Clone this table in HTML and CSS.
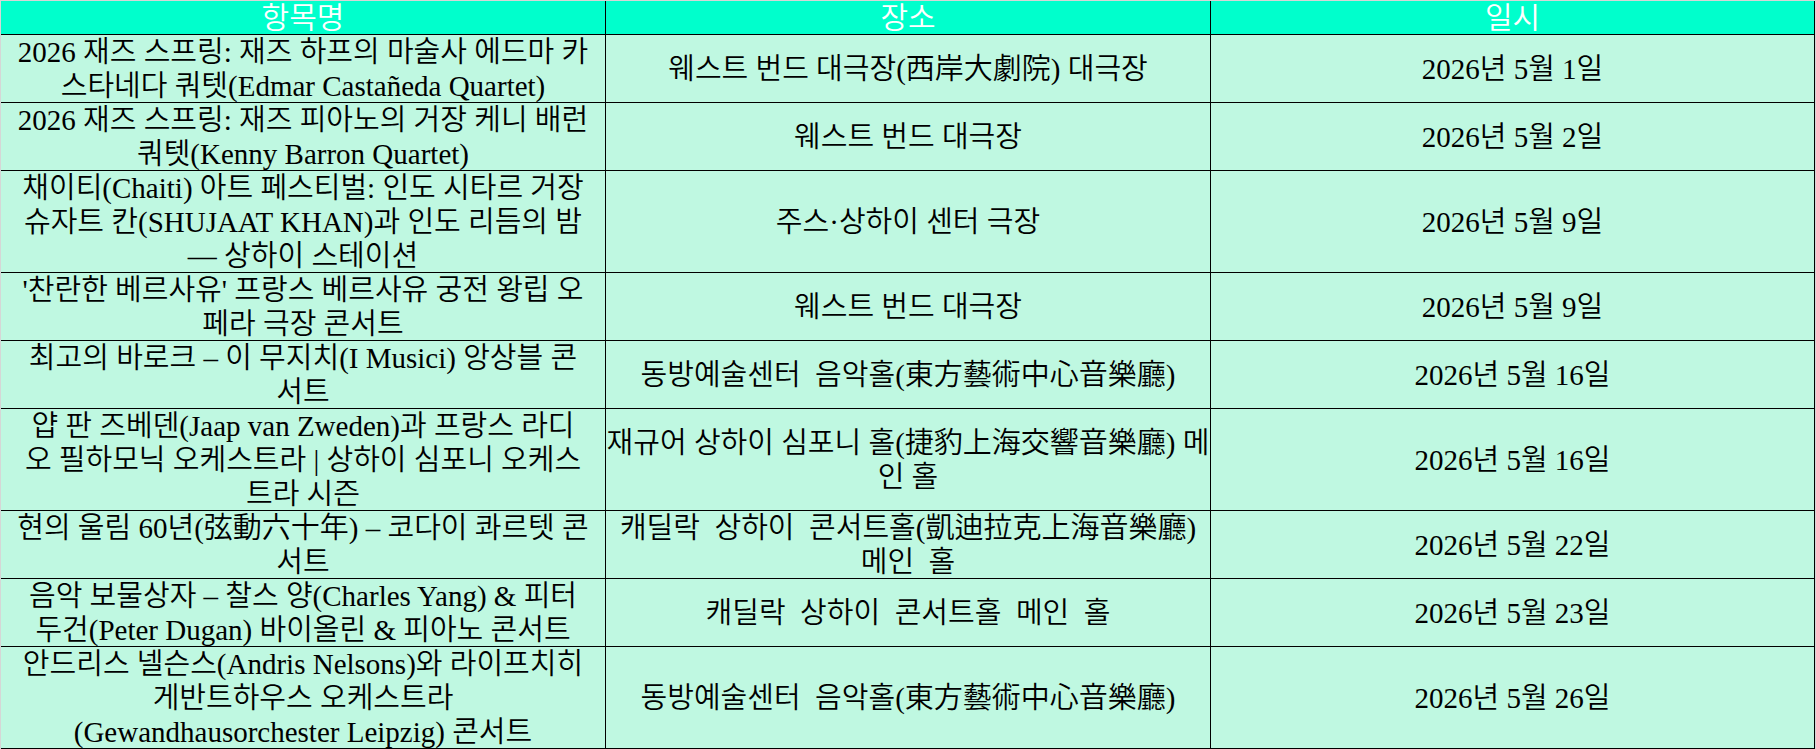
FILE: index.html
```html
<!DOCTYPE html>
<html lang="ko">
<head>
<meta charset="utf-8">
<title>공연 일정</title>
<link rel="stylesheet" href="styles.css">
</head>
<body>
<div class="sheet">
  <div class="cell head">항목명</div>
  <div class="cell head">장소</div>
  <div class="cell head">일시</div>

  <div class="cell">2026 재즈 스프링: 재즈 하프의 마술사 에드마 카<br>스타네다 쿼텟(Edmar Castañeda Quartet)</div>
  <div class="cell">웨스트 번드 대극장(西岸大劇院) 대극장</div>
  <div class="cell">2026년 5월 1일</div>

  <div class="cell">2026 재즈 스프링: 재즈 피아노의 거장 케니 배런<br>쿼텟(Kenny Barron Quartet)</div>
  <div class="cell">웨스트 번드 대극장</div>
  <div class="cell">2026년 5월 2일</div>

  <div class="cell">채이티(Chaiti) 아트 페스티벌: 인도 시타르 거장<br>슈자트 칸(SHUJAAT KHAN)과 인도 리듬의 밤<br>— 상하이 스테이션</div>
  <div class="cell">주스·상하이 센터 극장</div>
  <div class="cell">2026년 5월 9일</div>

  <div class="cell">'찬란한 베르사유' 프랑스 베르사유 궁전 왕립 오<br>페라 극장 콘서트</div>
  <div class="cell">웨스트 번드 대극장</div>
  <div class="cell">2026년 5월 9일</div>

  <div class="cell">최고의 바로크 – 이 무지치(I Musici) 앙상블 콘<br>서트</div>
  <div class="cell">동방예술센터&nbsp; 음악홀(東方藝術中心音樂廳)</div>
  <div class="cell">2026년 5월 16일</div>

  <div class="cell">얍 판 즈베덴(Jaap van Zweden)과 프랑스 라디<br>오 필하모닉 오케스트라 | 상하이 심포니 오케스<br>트라 시즌</div>
  <div class="cell">재규어 상하이 심포니 홀(捷豹上海交響音樂廳) 메<br>인 홀</div>
  <div class="cell">2026년 5월 16일</div>

  <div class="cell">현의 울림 60년(弦動六十年) – 코다이 콰르텟 콘<br>서트</div>
  <div class="cell">캐딜락&nbsp; 상하이&nbsp; 콘서트홀(凱迪拉克上海音樂廳)<br>메인&nbsp; 홀</div>
  <div class="cell">2026년 5월 22일</div>

  <div class="cell">음악 보물상자 – 찰스 양(Charles Yang) &amp; 피터<br>두건(Peter Dugan) 바이올린 &amp; 피아노 콘서트</div>
  <div class="cell">캐딜락&nbsp; 상하이&nbsp; 콘서트홀&nbsp; 메인&nbsp; 홀</div>
  <div class="cell">2026년 5월 23일</div>

  <div class="cell">안드리스 넬슨스(Andris Nelsons)와 라이프치히<br>게반트하우스 오케스트라<br>(Gewandhausorchester Leipzig) 콘서트</div>
  <div class="cell">동방예술센터&nbsp; 음악홀(東方藝術中心音樂廳)</div>
  <div class="cell">2026년 5월 26일</div>
</div>
</body>
</html>
```

FILE: styles.css
```css
html, body {
  margin: 0;
  padding: 0;
}
body {
  background: #d6d6d6;
  padding: 1px 0 0 1px;
  font-family: "Liberation Serif", "Noto Sans CJK KR DemiLight", "Noto Sans CJK KR Light", "Noto Sans CJK KR", serif;
  font-size: 29px;
  font-weight: normal;
  color: #000;
}
.sheet {
  display: grid;
  grid-template-columns: 605px 605px 604px;
  grid-template-rows: 34px 68px 68px 102px 68px 68px 102px 68px 68px 102px;
  width: 1814px;
}
.cell {
  box-sizing: border-box;
  border-right: 1px solid #000;
  border-bottom: 1px solid #000;
  background: #bff8e1;
  display: flex;
  align-items: center;
  justify-content: center;
  text-align: center;
  line-height: 34px;
  white-space: nowrap;
  overflow: hidden;
}
.head {
  background: #00ffcc;
  color: #fff;
  font-size: 30px;
  line-height: 33px;
}
```
